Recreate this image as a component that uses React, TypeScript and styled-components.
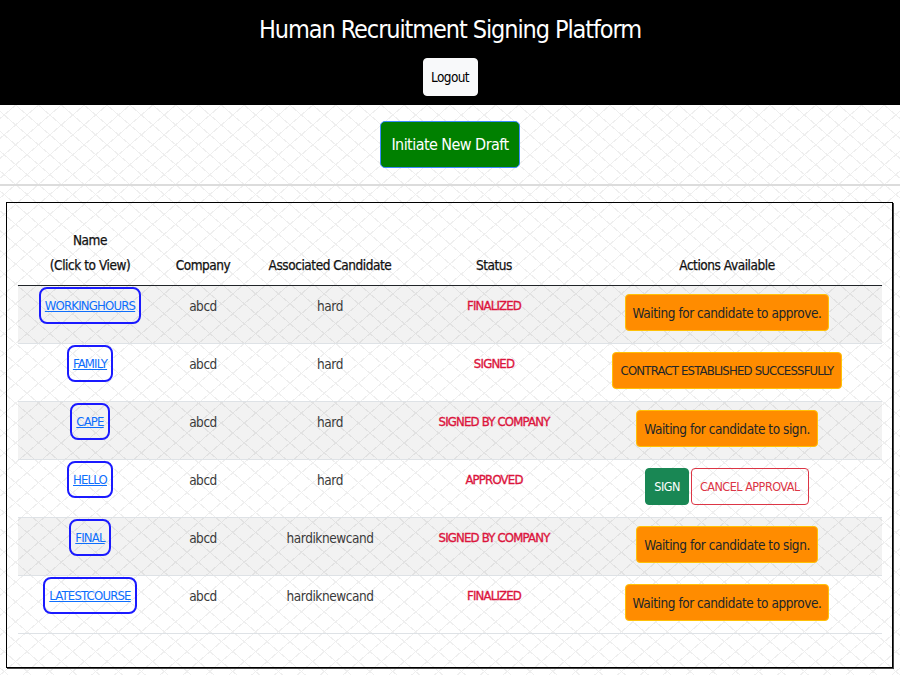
import React from "react";
import styled, { createGlobalStyle, css } from "styled-components";

const FONT = `"DejaVu Sans Condensed", "DejaVu Sans", sans-serif`;

const bodyText = css`
  font-size: 13.5px;
  letter-spacing: -0.45px;
`;

const capsText = css`
  font-size: 13px;
  letter-spacing: -0.8px;
`;

const GlobalStyle = createGlobalStyle`
  html, body { margin: 0; padding: 0; }
  * { box-sizing: border-box; }
  body {
    font-family: ${FONT};
    color: #212529;
    background-color: #ffffff;
    background-image:
      repeating-linear-gradient(139deg, transparent 0 14px, #efefef 14px 15px),
      repeating-linear-gradient(221deg, transparent 0 14px, #efefef 14px 15px);
  }
`;

const Header = styled.header`
  background: #000;
  height: 105px;
  display: flex;
  flex-direction: column;
  align-items: center;
  padding-top: 12px;
`;

const Title = styled.h1`
  margin: 0;
  font-size: 25px;
  letter-spacing: -1.1px;
  line-height: 36px;
  font-weight: 400;
  color: #fff;
`;

const LogoutButton = styled.button`
  margin-top: 10px;
  width: 55px;
  height: 38px;
  padding: 0;
  background: #f8f9fa;
  border: 1px solid #f8f9fa;
  border-radius: 4px;
  font-family: ${FONT};
  font-size: 13.5px;
  letter-spacing: -0.6px;
  color: #000;
`;

const DraftBar = styled.div`
  display: flex;
  justify-content: center;
  padding: 16px 0;
  border-bottom: 2px solid #dcdcdc;
`;

const DraftButton = styled.button`
  width: 140px;
  height: 47px;
  padding: 0;
  white-space: nowrap;
  background: #008000;
  border: 1px solid #3d8bfd;
  border-radius: 5px;
  color: #fff;
  font-family: ${FONT};
  font-size: 16px;
  letter-spacing: -0.55px;
`;

const TableCard = styled.section`
  margin: 16px 7px 7px 6px;
  border: 1px solid #000;
  box-shadow: 1px 1px 0 #444;
  padding: 17px 10px 33px 11px;
`;

const columns = `144px 82px 172px 156px 1fr`;

const HeadRow = styled.div`
  display: grid;
  grid-template-columns: ${columns};
  border-bottom: 1px solid #212529;
`;

const HeadCell = styled.div`
  padding: 8px 8px 7px;
  align-self: end;
  text-align: center;
  line-height: 25px;
  color: #111;
  -webkit-text-stroke: 0.25px #111;
  ${bodyText};
`;

const Row = styled.div<{ $striped?: boolean }>`
  display: grid;
  grid-template-columns: ${columns};
  height: 58px;
  border-bottom: 1px solid #dee2e6;
  background: ${(p) => (p.$striped ? "rgba(0, 0, 0, 0.05)" : "transparent")};
`;

const Cell = styled.div`
  padding: 8px 8px 0;
  text-align: center;
  line-height: 24px;
  color: #3a3a3a;
  ${bodyText};
`;

const NameCell = styled.div`
  display: flex;
  justify-content: center;
  align-items: flex-start;
  padding-top: 1px;
`;

const NameLink = styled.a`
  display: inline-flex;
  align-items: center;
  height: 37px;
  padding: 0 4px;
  border: 2px solid #1a1aff;
  border-radius: 8px;
  color: #0d6efd;
  text-decoration: underline;
  cursor: pointer;
  ${capsText};
`;

const StatusCell = styled.div`
  padding: 8px 4px 0;
  text-align: center;
  line-height: 24px;
  color: #dc143c;
  -webkit-text-stroke: 0.35px #dc143c;
  ${capsText};
`;

const ActionCell = styled.div`
  display: flex;
  justify-content: center;
  align-items: flex-start;
  gap: 2px;
  padding-top: 8px;
`;

const Notice = styled.div<{ $caps?: boolean }>`
  display: inline-flex;
  align-items: center;
  height: 37px;
  padding: 0 ${(p) => (p.$caps ? "8px" : "7px")};
  background: #ff8c00;
  border: 1px solid #ffc107;
  border-radius: 4px;
  color: #212529;
  ${(p) => (p.$caps ? capsText : bodyText)};
`;

const ActionButton = styled.button<{ $variant: "sign" | "cancel" }>`
  height: 37px;
  padding: 0 ${(p) => (p.$variant === "sign" ? "8px" : "8px")};
  border-radius: 4px;
  font-family: ${FONT};
  font-size: 12.5px;
  letter-spacing: -0.5px;
  border: 1px solid ${(p) => (p.$variant === "sign" ? "#198754" : "#dc3545")};
  background: ${(p) => (p.$variant === "sign" ? "#198754" : "transparent")};
  color: ${(p) => (p.$variant === "sign" ? "#fff" : "#dc3545")};
`;

type Action =
  | { kind: "notice"; text: string; caps?: boolean }
  | { kind: "sign" };

type Draft = {
  name: string;
  company: string;
  candidate: string;
  status: string;
  action: Action;
};

const drafts: Draft[] = [
  { name: "WORKINGHOURS", company: "abcd", candidate: "hard", status: "FINALIZED", action: { kind: "notice", text: "Waiting for candidate to approve." } },
  { name: "FAMILY", company: "abcd", candidate: "hard", status: "SIGNED", action: { kind: "notice", text: "CONTRACT ESTABLISHED SUCCESSFULLY", caps: true } },
  { name: "CAPE", company: "abcd", candidate: "hard", status: "SIGNED BY COMPANY", action: { kind: "notice", text: "Waiting for candidate to sign." } },
  { name: "HELLO", company: "abcd", candidate: "hard", status: "APPROVED", action: { kind: "sign" } },
  { name: "FINAL", company: "abcd", candidate: "hardiknewcand", status: "SIGNED BY COMPANY", action: { kind: "notice", text: "Waiting for candidate to sign." } },
  { name: "LATESTCOURSE", company: "abcd", candidate: "hardiknewcand", status: "FINALIZED", action: { kind: "notice", text: "Waiting for candidate to approve." } },
];

export default function App() {
  return (
    <>
      <GlobalStyle />
      <Header>
        <Title>Human Recruitment Signing Platform</Title>
        <LogoutButton>Logout</LogoutButton>
      </Header>
      <DraftBar>
        <DraftButton>Initiate New Draft</DraftButton>
      </DraftBar>
      <TableCard>
        <HeadRow>
          <HeadCell>
            Name
            <br />
            (Click to View)
          </HeadCell>
          <HeadCell>Company</HeadCell>
          <HeadCell>Associated Candidate</HeadCell>
          <HeadCell>Status</HeadCell>
          <HeadCell>Actions Available</HeadCell>
        </HeadRow>
        {drafts.map((d, i) => (
          <Row key={d.name} $striped={i % 2 === 0}>
            <NameCell>
              <NameLink>{d.name}</NameLink>
            </NameCell>
            <Cell>{d.company}</Cell>
            <Cell>{d.candidate}</Cell>
            <StatusCell>{d.status}</StatusCell>
            <ActionCell>
              {d.action.kind === "notice" ? (
                <Notice $caps={d.action.caps}>{d.action.text}</Notice>
              ) : (
                <>
                  <ActionButton $variant="sign">SIGN</ActionButton>
                  <ActionButton $variant="cancel">CANCEL APPROVAL</ActionButton>
                </>
              )}
            </ActionCell>
          </Row>
        ))}
      </TableCard>
    </>
  );
}
